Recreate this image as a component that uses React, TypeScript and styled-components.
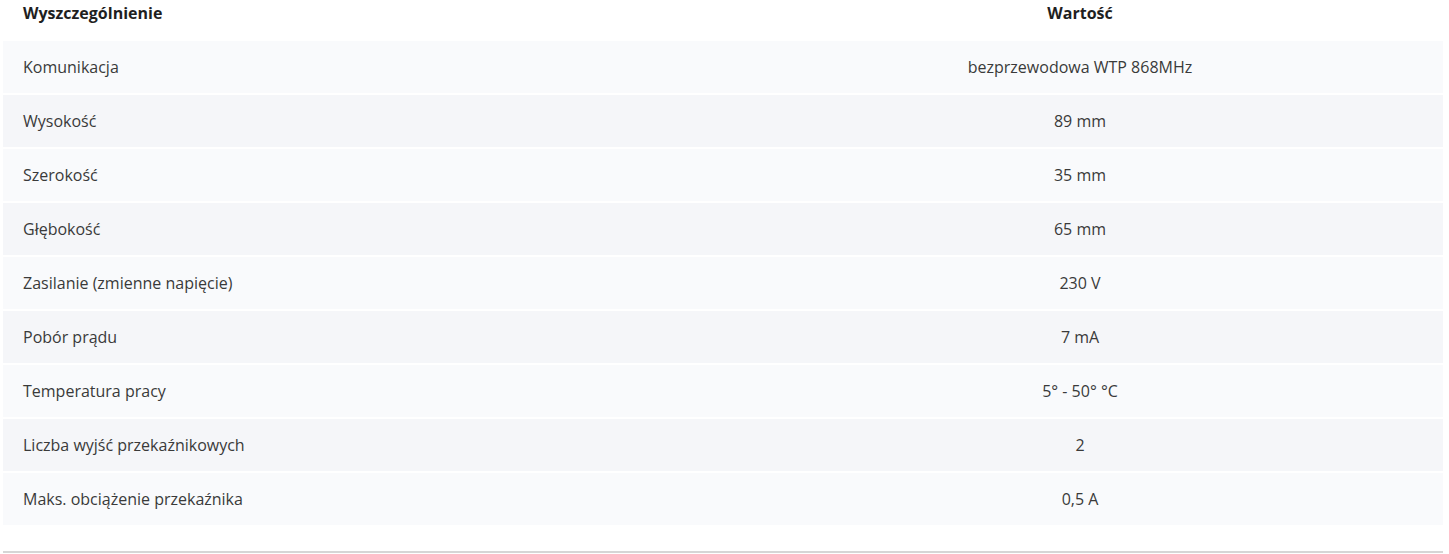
import React from "react";
import styled, { createGlobalStyle } from "styled-components";

const Global = createGlobalStyle`
  html, body { margin: 0; padding: 0; background: #fff; }
  body { font-family: "Open Sans", "Liberation Sans", sans-serif; }
`;

const Wrapper = styled.div`
  padding: 0 6px 0 3px;
`;

const Table = styled.div`
  display: flex;
  flex-direction: column;
  gap: 2px;
  border-bottom: 2px solid #d6d6d6;
  padding-bottom: 26px;
`;

const Row = styled.div<{ $tone: "head" | "odd" | "even" }>`
  display: grid;
  grid-template-columns: 714px 1fr;
  align-items: center;
  height: ${(p) => (p.$tone === "head" ? "39px" : "52px")};
  background: ${(p) =>
    p.$tone === "head" ? "#fff" : p.$tone === "odd" ? "#f9fafc" : "#f5f6f9"};
  font-size: 16px;
  color: ${(p) => (p.$tone === "head" ? "#1f1f1f" : "#3a3a3a")};
  font-weight: ${(p) => (p.$tone === "head" ? 700 : 400)};
`;

const Cell = styled.div<{ $center?: boolean }>`
  padding: 0 20px;
  text-align: ${(p) => (p.$center ? "center" : "left")};
  white-space: nowrap;
`;

const HeadRow = styled(Row)`
  align-items: flex-start;
  padding-top: 2px;
  height: 37px;
`;

const rows: [string, string][] = [
  ["Komunikacja", "bezprzewodowa WTP 868MHz"],
  ["Wysokość", "89 mm"],
  ["Szerokość", "35 mm"],
  ["Głębokość", "65 mm"],
  ["Zasilanie (zmienne napięcie)", "230 V"],
  ["Pobór prądu", "7 mA"],
  ["Temperatura pracy", "5° - 50° °C"],
  ["Liczba wyjść przekaźnikowych", "2"],
  ["Maks. obciążenie przekaźnika", "0,5 A"],
];

export default function App() {
  return (
    <Wrapper>
      <Global />
      <Table>
        <HeadRow $tone="head">
          <Cell>Wyszczególnienie</Cell>
          <Cell $center>Wartość</Cell>
        </HeadRow>
        {rows.map(([k, v], i) => (
          <Row key={k} $tone={i % 2 === 0 ? "odd" : "even"}>
            <Cell>{k}</Cell>
            <Cell $center>{v}</Cell>
          </Row>
        ))}
      </Table>
    </Wrapper>
  );
}
